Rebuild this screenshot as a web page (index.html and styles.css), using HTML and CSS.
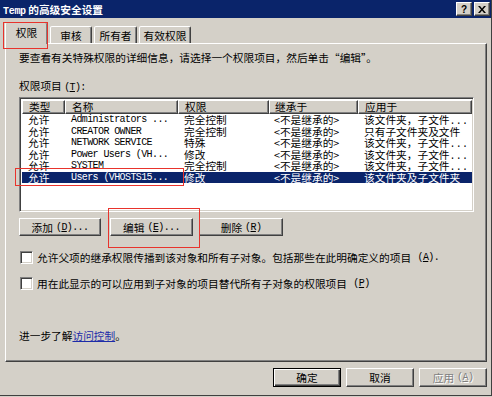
FILE: index.html
```html
<!DOCTYPE html>
<html lang="zh-CN">
<head>
<meta charset="UTF-8">
<title>Temp 的高级安全设置</title>
<link rel="stylesheet" href="styles.css">
</head>
<body>
<div class="dialog">
  <div class="titlebar">
    <span class="title"><span class="mono">Temp</span> 的高级安全设置</span>
    <div class="caption-buttons">
      <span class="cap-btn">?</span>
      <span class="cap-btn">
        <svg width="8" height="7" viewBox="0 0 8 7"><path d="M0 0h2l2 2.5L6 0h2L5 3.5 8 7H6L4 4.5 2 7H0l3-3.5z" fill="#000"/></svg>
      </span>
    </div>
  </div>

  <div class="content">
    <div class="tabs">
      <div class="tab active">权限</div>
      <div class="tab w42">审核</div>
      <div class="tab w43">所有者</div>
      <div class="tab w52">有效权限</div>
    </div>

    <div class="panel">
      <p class="desc">要查看有关特殊权限的详细信息，请选择一个权限项目，然后单击“编辑”。</p>
      <p class="label">权限项目 <span class="mono">(<u>T</u>):</span></p>

      <div class="listbox">
        <div class="row header">
          <span class="c1">类型</span><span class="c2">名称</span><span class="c3">权限</span><span class="c4">继承于</span><span class="c5">应用于</span>
        </div>
        <div class="row"><span class="c1">允许</span><span class="c2 mono">Administrators ...</span><span class="c3">完全控制</span><span class="c4">&lt;不是继承的&gt;</span><span class="c5">该文件夹，子文件<span class="mono">...</span></span></div>
        <div class="row"><span class="c1">允许</span><span class="c2 mono">CREATOR OWNER</span><span class="c3">完全控制</span><span class="c4">&lt;不是继承的&gt;</span><span class="c5">只有子文件夹及文件</span></div>
        <div class="row"><span class="c1">允许</span><span class="c2 mono">NETWORK SERVICE</span><span class="c3">特殊</span><span class="c4">&lt;不是继承的&gt;</span><span class="c5">该文件夹，子文件<span class="mono">...</span></span></div>
        <div class="row"><span class="c1">允许</span><span class="c2 mono">Power Users (VH...</span><span class="c3">修改</span><span class="c4">&lt;不是继承的&gt;</span><span class="c5">该文件夹，子文件<span class="mono">...</span></span></div>
        <div class="row"><span class="c1">允许</span><span class="c2 mono">SYSTEM</span><span class="c3">完全控制</span><span class="c4">&lt;不是继承的&gt;</span><span class="c5">该文件夹，子文件<span class="mono">...</span></span></div>
        <div class="row selected"><span class="c1">允许</span><span class="c2 mono">Users (VHOSTS15...</span><span class="c3">修改</span><span class="c4">&lt;不是继承的&gt;</span><span class="c5">该文件夹及子文件夹</span></div>
      </div>

      <div class="list-buttons">
        <span class="btn w82">添加 <span class="mono">(<u>D</u>)...</span></span>
        <span class="btn w83 ml9">编辑 <span class="mono">(<u>E</u>)...</span></span>
        <span class="btn w84 ml6">删除 <span class="mono">(<u>R</u>)</span></span>
      </div>

      <label class="check first"><span class="box"></span>允许父项的继承权限传播到该对象和所有子对象。包括那些在此明确定义的项目&nbsp;<span class="mono">(<u>A</u>).</span></label>
      <label class="check"><span class="box"></span>用在此显示的可以应用到子对象的项目替代所有子对象的权限项目&nbsp;<span class="mono">(<u>P</u>)</span></label>

      <p class="more">进一步了解<a href="#">访问控制</a>。</p>
    </div>

    <div class="footer">
      <span class="btn fbtn default">确定</span>
      <span class="btn fbtn">取消</span>
      <span class="btn fbtn disabled">应用 <span class="mono">(<u>A</u>)</span></span>
    </div>
  </div>

  <!-- red annotation boxes -->
  <div class="mark mark-tab"></div>
  <div class="mark mark-row"></div>
  <div class="mark mark-edit"></div>
</div>
</body>
</html>
```

FILE: styles.css
```css
:root {
  --face: #d4d0c8;
  --light: #ffffff;
  --shadow: #808080;
  --dark: #404040;
  --navy: #0a246a;
  --mark: #e8332c;
}

body {
  margin: 0;
  background: var(--face);
  font-family: "Noto Sans CJK SC", "Liberation Sans", sans-serif;
  font-size: 10.7px;
  color: #000;
}

p {
  margin: 0;
}

.mono {
  font-family: "Liberation Mono", "Noto Sans CJK SC", monospace;
  font-size: 10px;
  letter-spacing: -0.6px;
}

.dialog {
  position: relative;
  width: 492px;
  height: 396px;
  box-sizing: border-box;
  border-right: 1px solid var(--dark);
  border-bottom: 1px solid var(--dark);
  background: var(--face);
}

/* title bar */
.titlebar {
  height: 18px;
  background: var(--navy);
  display: flex;
  align-items: center;
  justify-content: space-between;
  padding: 0 1px 0 3px;
  color: #fff;
  font-weight: bold;
}

.titlebar .mono {
  font-size: 10px;
  letter-spacing: -0.3px;
}

.caption-buttons {
  display: flex;
  gap: 2px;
}

.cap-btn {
  width: 14px;
  height: 12px;
  background: var(--face);
  border: 1px solid;
  border-color: var(--light) var(--dark) var(--dark) var(--light);
  box-shadow: inset -1px -1px var(--shadow);
  display: flex;
  align-items: center;
  justify-content: center;
  color: #000;
  font-family: "Liberation Sans", sans-serif;
  font-size: 10px;
  font-weight: bold;
}

.content {
  padding: 0 4px 0 5px;
}

/* tabs */
.tabs {
  display: flex;
  align-items: flex-end;
  margin-top: 4px;
  height: 21px;
  position: relative;
  z-index: 1;
}

.tab {
  height: 17px;
  box-sizing: border-box;
  border: 1px solid;
  border-bottom: none;
  border-color: var(--light) var(--dark) transparent var(--light);
  box-shadow: inset -1px 0 var(--shadow);
  border-radius: 2px 2px 0 0;
  display: flex;
  align-items: center;
  justify-content: center;
  background: var(--face);
}

.tab.active {
  width: 43px;
  height: 22px;
  margin-bottom: -1px;
  padding-bottom: 3px;
}

.w42 { width: 42px; margin-left: 2px; }
.w43 { width: 43px; margin-left: 2px; }
.w52 { width: 52px; margin-left: 2px; }

/* panel */
.panel {
  height: 319px;
  box-sizing: border-box;
  border: 1px solid;
  border-color: var(--light) var(--dark) var(--dark) var(--light);
  box-shadow: inset -1px -1px var(--shadow);
  padding: 7px 0 0 13px;
}

.desc {
  line-height: 13px;
}

.label {
  line-height: 13px;
  margin-top: 15px;
}

u {
  text-decoration: underline;
  text-underline-offset: 1px;
}

/* list view */
.listbox {
  width: 455px;
  height: 115px;
  box-sizing: border-box;
  margin-top: 3px;
  border: 1px solid;
  border-color: var(--shadow) var(--light) var(--light) var(--shadow);
  box-shadow: inset 1px 1px var(--dark), inset -1px -1px var(--face);
  background: #fff;
  padding: 2px 0 0 2px;
}

.row {
  display: flex;
  height: 11.5px;
  line-height: 11.5px;
  white-space: nowrap;
}

.row .c1 { width: 43px; padding-left: 6px; box-sizing: border-box; }
.row .c2 { width: 113px; padding-left: 6px; box-sizing: border-box; }
.row .c3 { width: 91px; padding-left: 6px; box-sizing: border-box; }
.row .c4 { width: 89px; padding-left: 5px; box-sizing: border-box; }
.row .c5 { width: 114px; padding-left: 6px; box-sizing: border-box; }

.row .c5 .mono {
  letter-spacing: 0.2px;
}

.row.header {
  height: 14px;
  line-height: 12px;
}

.row.header span {
  box-sizing: border-box;
  height: 14px;
  border: 1px solid;
  border-color: var(--light) var(--dark) var(--dark) var(--light);
  box-shadow: inset -1px -1px var(--shadow);
  background: var(--face);
}

.row.selected {
  background: var(--navy);
  color: #fff;
  width: 450px;
}

/* buttons */
.list-buttons {
  display: flex;
  margin-top: 6px;
}

.btn {
  height: 18px;
  box-sizing: border-box;
  border: 1px solid;
  border-color: var(--light) var(--dark) var(--dark) var(--light);
  box-shadow: inset -1px -1px var(--shadow);
  display: flex;
  align-items: center;
  justify-content: center;
  gap: 3px;
  background: var(--face);
  white-space: nowrap;
}

.w82 { width: 82px; }
.w83 { width: 83px; }
.w84 { width: 84px; }
.ml9 { margin-left: 9px; }
.ml6 { margin-left: 6px; }

/* checkboxes */
.check {
  display: flex;
  align-items: center;
  gap: 4px;
  margin-top: 13px;
  margin-left: 1px;
  line-height: 13px;
  white-space: nowrap;
}

.check.first {
  margin-top: 15px;
}

.box {
  width: 13px;
  height: 13px;
  box-sizing: border-box;
  border: 1px solid;
  border-color: var(--shadow) var(--light) var(--light) var(--shadow);
  box-shadow: inset 1px 1px var(--dark), inset -1px -1px var(--face);
  background: #fff;
}

.more {
  margin-top: 39px;
  line-height: 13px;
}

.more a {
  color: #1c2ba8;
  text-decoration: underline;
}

/* footer */
.footer {
  display: flex;
  justify-content: flex-end;
  gap: 5px;
  margin-top: 6px;
}

.fbtn {
  width: 68px;
  height: 19px;
}

.fbtn.default {
  border-color: #000;
  box-shadow: inset 1px 1px var(--light), inset -1px -1px var(--dark), inset -2px -2px var(--shadow);
}

.fbtn.disabled {
  color: var(--shadow);
  text-shadow: 1px 1px var(--light);
}

/* red annotation boxes */
.mark {
  position: absolute;
  border: 1px solid var(--mark);
  z-index: 5;
}

.mark-tab { left: 3px; top: 22px; width: 43px; height: 25px; }
.mark-row { left: 15px; top: 168px; width: 167px; height: 16px; }
.mark-edit { left: 108px; top: 208px; width: 90px; height: 38px; }
```
